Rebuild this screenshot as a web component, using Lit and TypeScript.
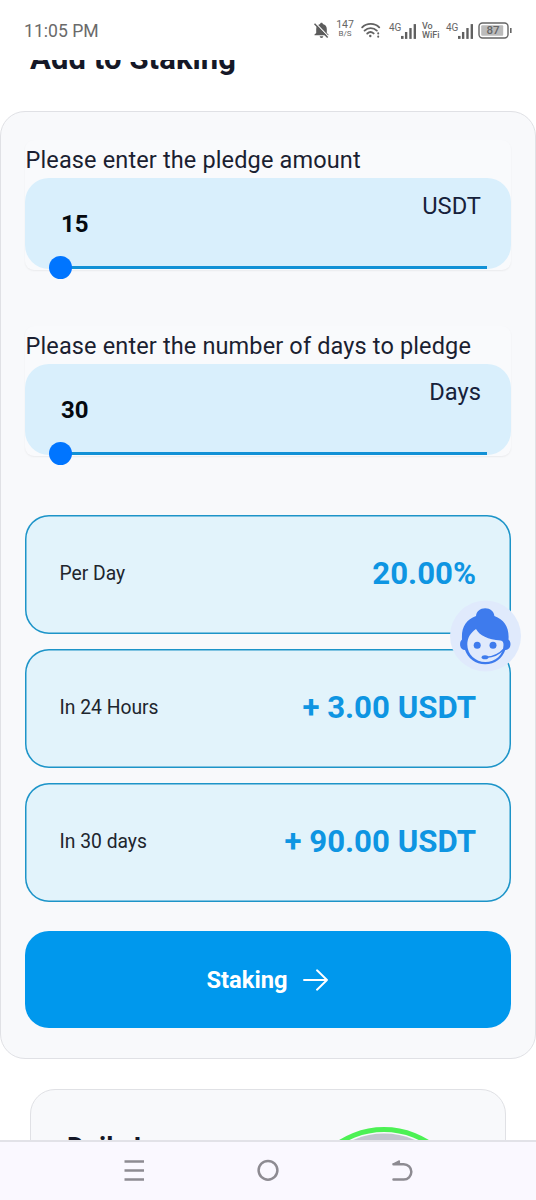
import { LitElement, html, css, svg } from "lit";
import { customElement, property } from "lit/decorators.js";

@customElement("status-bar")
class StatusBar extends LitElement {
  static styles = css`
    :host { display: block; height: 60px; background: #fff; color: #666; flex: none; }
    .bar { display: flex; align-items: center; height: 60px; padding: 0 24px; box-sizing: border-box; }
    .time { font-size: 17.6px; margin-right: auto; color: #6a6a6a; padding-top: 1px; }
    svg { display: block; flex: none; }
    .stack { display: flex; flex-direction: column; align-items: center; font-weight: 400; }
    .rate { width: 18px; margin-left: 7px; margin-right: 1px; margin-top: -3px; }
    .rate .n { font-size: 10.5px; line-height: 10px; }
    .rate .u { font-size: 8px; line-height: 8px; }
    .wifi { margin-left: 6px; margin-right: 1px; }
    .sig { display: flex; align-items: flex-start; font-size: 10px; line-height: 11px; }
    .sig svg { margin-left: 0; margin-top: 2px; }
    .sig.a { margin-left: 7px; width: 28px; }
    .sig.b { margin-left: 6px; width: 28px; }
    .vo { margin-left: 5px; width: 18px; align-items: flex-start; font-size: 9px; line-height: 9px; font-weight: 500; padding-top: 1px; }
    .battery { margin-left: 4px; margin-right: -1px; display: grid; }
    .battery > * { grid-area: 1 / 1; }
    .battery span { font-size: 11.5px; line-height: 17px; padding-left: 8.5px; font-weight: 500; z-index: 1; }
  `;
  bars() {
    return svg`<rect x="0" y="12" width="2.6" height="3"/><rect x="4" y="8" width="2.4" height="7"/><rect x="8.4" y="4" width="2.4" height="11"/><rect x="12.8" y="0" width="2.4" height="15"/>`;
  }
  render() {
    return html`<div class="bar">
      <span class="time">11:05 PM</span>
      <svg width="15" height="17" viewBox="0 0 15 17" fill="#5c5c5c">
        <path d="M7.5 .8c.8 0 1.300.5 1.300 1.300 2.600.6 4 2.400 4 5v3.800l1.700 1.700v.6H.5v-.6l1.700-1.700V7.100c0-2.600 1.400-4.400 4-5 0-.8.5-1.300 1.300-1.300z"/>
        <path d="M5.7 14.200h3.600a1.800 1.800 0 0 1-3.600 0z"/>
        <path d="M1.500 1 14.700 14.800" stroke="#fff" stroke-width="1.100"/>
        <path d="M.5 1.800 13.700 15.600" stroke="#5c5c5c" stroke-width="1.500"/>
      </svg>
      <span class="stack rate"><span class="n">147</span><span class="u">B/S</span></span>
      <svg class="wifi" width="20" height="16" viewBox="0 0 20 16" fill="none" stroke="#626262" stroke-width="1.9" stroke-linecap="round">
        <path d="M1.200 5.300c4.500-4.600 12.500-4.600 17 0M3.600 8.600c3.400-3.300 8.800-3.300 12.200 0M6.300 11.500c2-1.800 4.400-1.800 6.300-.1"/>
        <circle cx="9.300" cy="14" r="1.200" fill="#626262" stroke="none"/>
        <path d="M17.200 11.300v.1M17.200 14.600v.1" stroke-width="2"/>
      </svg>
      <span class="sig a">4G<svg width="15" height="15" viewBox="0 0 15.200 15" fill="#606060">${this.bars()}</svg></span>
      <span class="stack vo"><span>Vo</span><span>WiFi</span></span>
      <span class="sig b">4G<svg width="15" height="15" viewBox="0 0 15.200 15" fill="#606060">${this.bars()}</svg></span>
      <span class="battery">
        <svg width="35" height="17" viewBox="0 0 35 17"><rect x="1" y="1" width="29" height="15" rx="3.500" fill="none" stroke="#666" stroke-width="1.400"/><rect x="3.200" y="3.200" width="22" height="10.600" rx="1" fill="#bbb"/><path d="M32.800 6v5" stroke="#666" stroke-width="1.600"/></svg>
        <span>87</span>
      </span>
    </div>`;
  }
}

@customElement("pledge-field")
class PledgeField extends LitElement {
  @property() label = "";
  @property() value = "";
  @property() unit = "";
  static styles = css`
    :host { display: block; }
    .group { height: 130px; box-sizing: border-box; border-radius: 9px; background: #f9fafc; box-shadow: 0 1px 2px #0000000f; }
    .label { height: 38px; line-height: 41px; font-size: 23.5px; letter-spacing: 0.14px; color: #1b1f31; white-space: nowrap; padding-left: 0.5px; }
    .field { height: 91px; box-sizing: border-box; border-radius: 24px; background: #d9effc; display: grid; grid-template: 88px 3px / 1fr auto; padding: 0 24px 0 36px; }
    .value { font-size: 24px; font-weight: 700; line-height: 92px; color: #05090f; }
    .unit { font-size: 23.7px; line-height: 56px; color: #16213a; padding-right: 6px; }
    .track { grid-column: 1 / 3; height: 3px; background: #1291d6; display: flex; align-items: center; }
    .thumb { width: 23px; height: 23px; flex: none; border-radius: 50%; background: #0075ff; margin-left: -12px; }
  `;
  render() {
    return html`<div class="group">
      <div class="label">${this.label}</div>
      <div class="field">
        <span class="value">${this.value}</span><span class="unit">${this.unit}</span>
        <div class="track"><div class="thumb"></div></div>
      </div>
    </div>`;
  }
}

@customElement("support-button")
class SupportButton extends LitElement {
  static styles = css`:host { display: block; } svg { display: block; }`;
  render() {
    return html`<svg width="72" height="72" viewBox="0 0 72 72">
      <circle cx="36.500" cy="36" r="35.500" fill="#e0eafc"/>
      <path d="M13 39.500c-.8-12.500 4-19.500 14-23.500 .5-4.500 4-7.700 9.200-7.700s8.700 3.200 9.200 7.700c10 4 15 11 14.100 23.500 1.800 1.500 2.300 3.700 1.800 6.200-.5 2.600-2.200 4.100-5 4.300-3 8.500-10.300 14.200-20.100 14.200S19 58.500 16 50c-2.700-.2-4.400-1.700-4.800-4.300-.4-2.500.2-4.700 1.800-6.200z" fill="#3e7bed"/>
      <path d="M18.300 44.500c0-6.500 3-11.500 8.700-15.500 3.500 6.500 12 10.500 24.500 11.500 2.500.2 3 2 3 4.500 0 9.800-8.200 17-18.100 17s-18.100-7.500-18.100-17.500z" fill="#e0eafc"/>
      <circle cx="28.200" cy="45.200" r="3.500" fill="#3e7bed"/><circle cx="44" cy="45.200" r="3.500" fill="#3e7bed"/>
      <path d="M55 49c-4.500 5-10.500 8-18 8.300" fill="none" stroke="#3e7bed" stroke-width="1.500"/>
      <ellipse cx="36" cy="57.300" rx="3.400" ry="2" fill="#3e7bed"/>
    </svg>`;
  }
}

@customElement("nav-bar")
class NavBar extends LitElement {
  static styles = css`
    :host { display: block; flex: none; }
    .nav { height: 60px; box-sizing: border-box; border-top: 2px solid #e2e2e8; background: #faf8ff; display: grid; grid-template-columns: repeat(3, 134px); justify-content: center; justify-items: center; align-items: center; }
    svg { display: block; }
  `;
  render() {
    return html`<div class="nav">
      <svg width="22" height="24" viewBox="0 0 22 24" stroke="#8d8b92" stroke-width="2.600"><path d="M1.500 2.500H21M1.500 11.500H21M1.500 20.500H21"/></svg>
      <svg width="24" height="24" viewBox="0 0 24 24" fill="none" stroke="#8d8b92" stroke-width="2.500"><circle cx="12" cy="11.300" r="9.400"/></svg>
      <svg width="22" height="24" viewBox="0 0 22 24" fill="none" stroke="#8d8b92" stroke-width="2.500" stroke-linejoin="round" stroke-linecap="round"><path d="M2.500 5.200H12.700a7.600 7.600 0 0 1 0 15.300H2.500"/><path d="M2.500 5 8.300 2v3z" fill="#8d8b92" stroke-width="1.500"/></svg>
    </div>`;
  }
}

@customElement("app-root")
class AppRoot extends LitElement {
  static styles = css`
    :host { display: block; font-family: Roboto, sans-serif; }
    .screen { width: 536px; height: 1200px; display: flex; flex-direction: column; overflow: hidden; background: #fff; position: relative; }
    .view { flex: 1; min-height: 0; overflow: hidden; display: flex; flex-direction: column; }
    .title { flex: none; font-size: 31px; font-weight: 700; color: #151827; line-height: 40px; height: 40px; margin-top: -21px; padding-left: 30px; letter-spacing: 0.1px; }
    .card { flex: none; box-sizing: border-box; height: 948px; margin-top: 32px; border: 1px solid #e0e1e5; border-radius: 25px; background: #f8f9fb; padding: 28px 24px 0; }
    .fields { display: flex; flex-direction: column; gap: 56px; }
    .stats { display: flex; flex-direction: column; gap: 15px; margin-top: 58.5px; }
    .stat { height: 119px; box-sizing: border-box; box-shadow: inset 0 0 0 1.5px #1d94c8; border-radius: 24px; background: #e2f3fb; display: flex; align-items: center; justify-content: space-between; padding: 0 35px 2px 34.5px; }
    .name { font-size: 19.3px; color: #20252d; }
    .amount { font-size: 31.2px; font-weight: 700; color: #0e95e2; }
    .submit { margin-top: 29.5px; height: 97px; border-radius: 24px; background: #0098ed; color: #fff; display: flex; align-items: center; justify-content: center; gap: 15px; font-size: 23.7px; font-weight: 700; padding: 1px 1px 0 0; box-sizing: border-box; }
    .submit svg { display: block; }
    .next { flex: none; box-sizing: border-box; margin: 30px 30px 0; height: 180px; border: 1px solid #e0e1e5; border-radius: 25px; background: #f8f9fb; display: flex; justify-content: space-between; padding: 37px 37px 0 36px; }
    .next-title { font-size: 27px; font-weight: 700; line-height: 42px; color: #151827; }
    .ring { width: 168px; height: 168px; flex: none; }
    .support { position: absolute; left: 449px; top: 600px; }
  `;
  stats = [["Per Day", "20.00%"], ["In 24 Hours", "+ 3.00 USDT"], ["In 30 days", "+ 90.00 USDT"]];
  render() {
    return html`<div class="screen">
      <status-bar></status-bar>
      <div class="view">
        <div class="title">Add to Staking</div>
        <div class="card">
          <div class="fields">
            <pledge-field label="Please enter the pledge amount" value="15" unit="USDT"></pledge-field>
            <pledge-field label="Please enter the number of days to pledge" value="30" unit="Days"></pledge-field>
          </div>
          <div class="stats">
            ${this.stats.map(([n, a]) => html`<div class="stat"><span class="name">${n}</span><span class="amount">${a}</span></div>`)}
          </div>
          <div class="submit"><span>Staking</span>
            <svg width="26" height="22" viewBox="0 0 26 22" fill="none" stroke="#fff" stroke-width="1.900" stroke-linecap="round" stroke-linejoin="round"><path d="M1 11h23M14 1.300 24 11l-10 9.700"/></svg>
          </div>
        </div>
        <div class="next">
          <span class="next-title">Daily Income</span>
          <svg class="ring" viewBox="0 0 168 168"><circle cx="84" cy="84" r="81.500" fill="none" stroke="#4cf154" stroke-width="5"/><circle cx="84" cy="84" r="77.500" fill="#c3c6cf"/></svg>
        </div>
      </div>
      <nav-bar></nav-bar>
      <support-button class="support"></support-button>
    </div>`;
  }
}
